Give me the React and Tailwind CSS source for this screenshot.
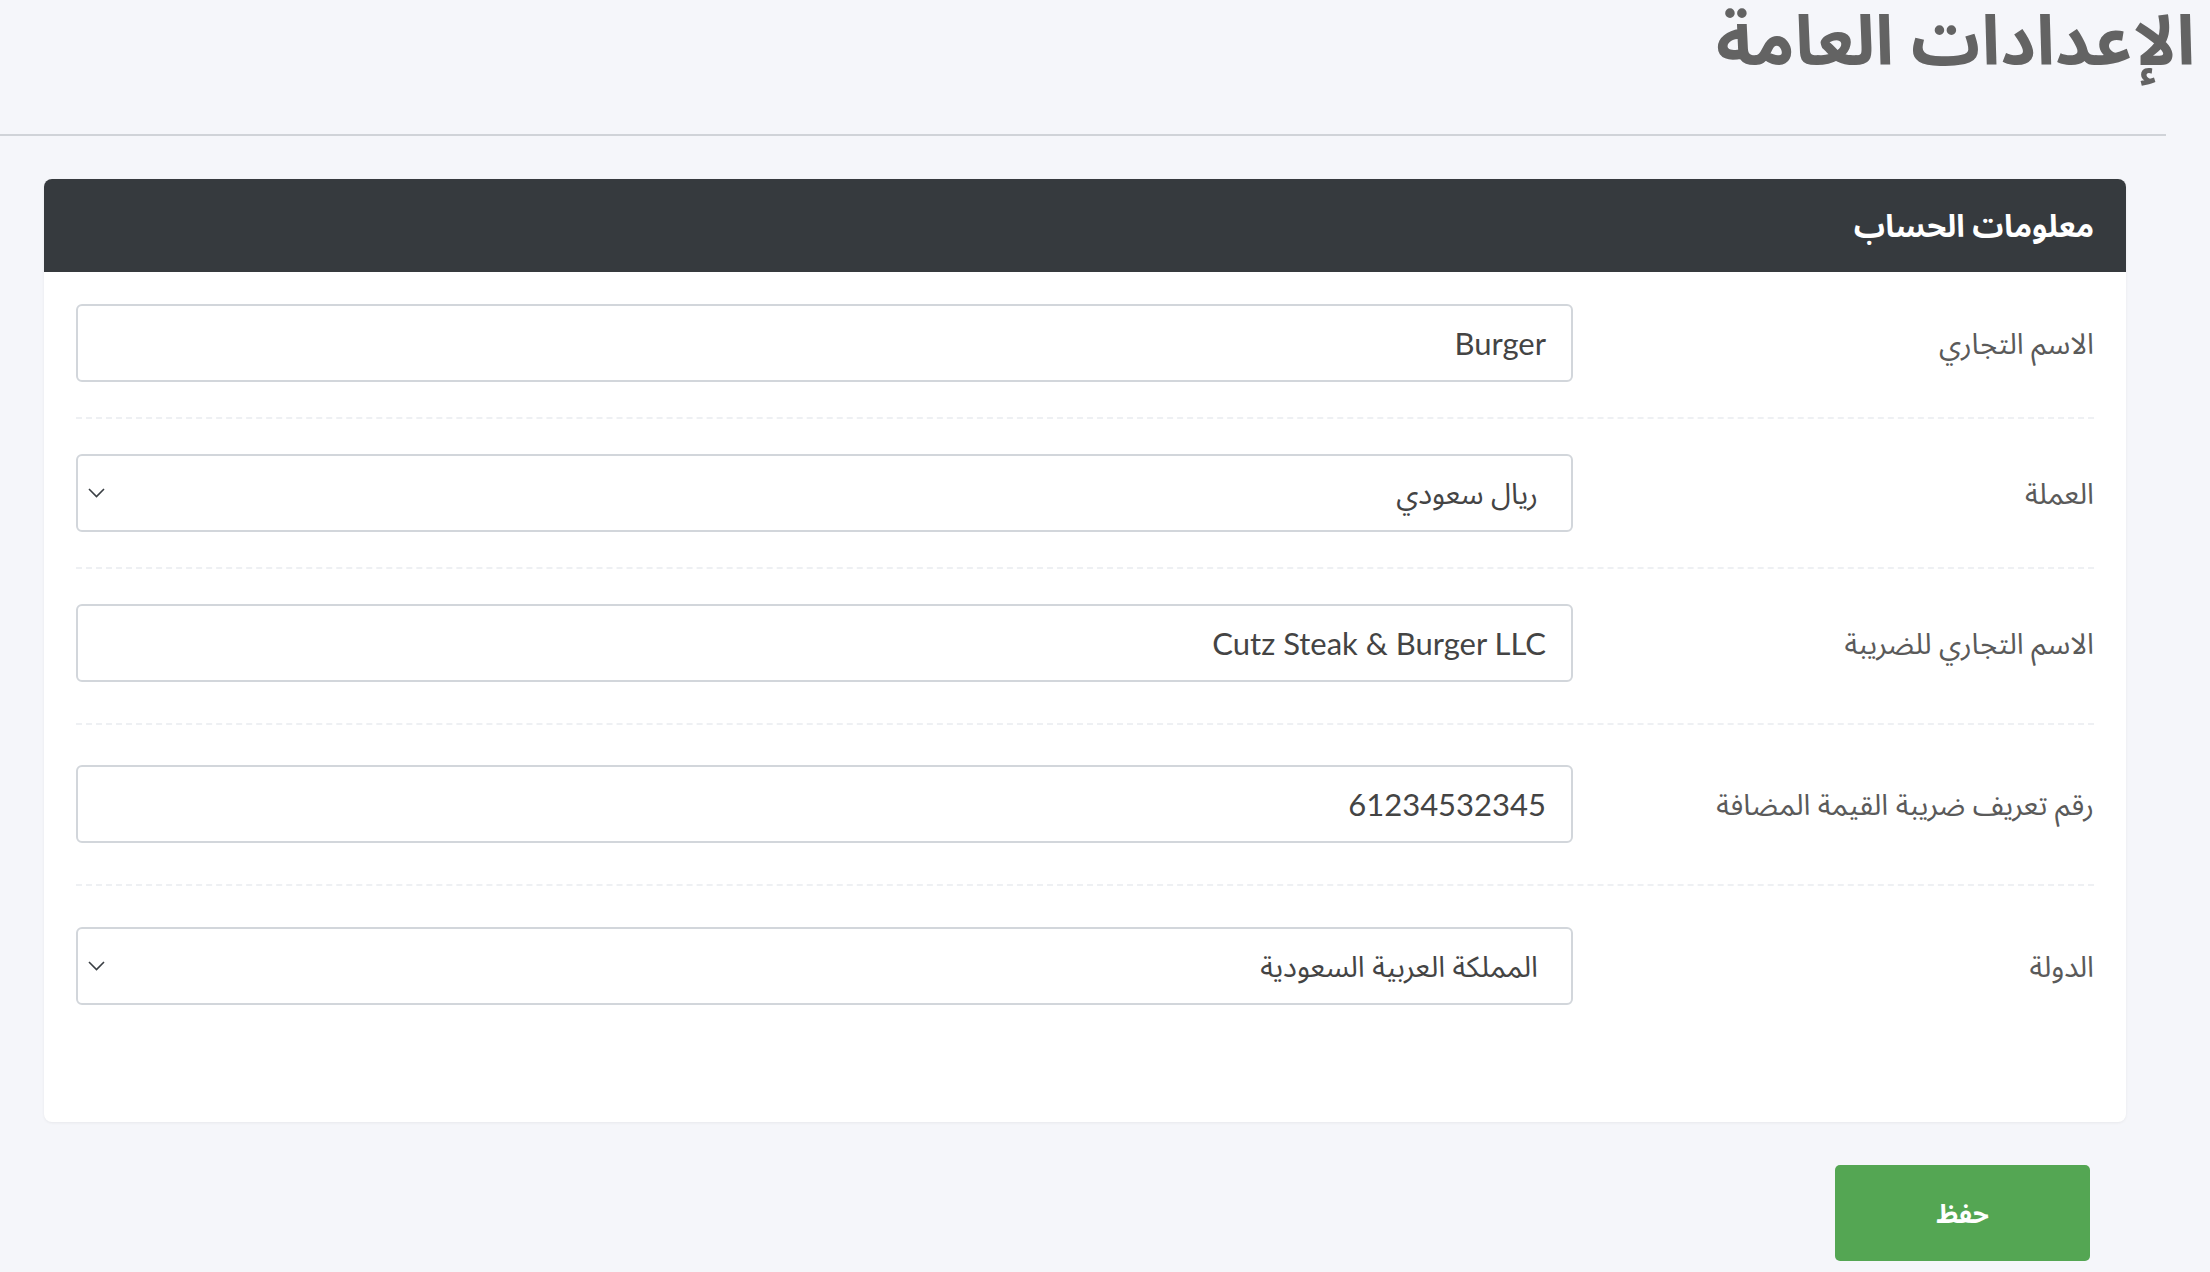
const rows = [
  { label: "الاسم التجاري", value: "Burger", type: "input", pad: "pt-[32px] pb-[35px] border-b-2 border-dashed border-[#eef0f3]" },
  { label: "العملة", value: "ريال سعودي", type: "select", pad: "pt-[35px] pb-[35px] border-b-2 border-dashed border-[#eef0f3]" },
  { label: "الاسم التجاري للضريبة", value: "Cutz Steak & Burger LLC", type: "input", pad: "pt-[35px] pb-[41px] border-b-2 border-dashed border-[#eef0f3]" },
  { label: "رقم تعريف ضريبة القيمة المضافة", value: "61234532345", type: "input", pad: "pt-[40px] pb-[41px] border-b-2 border-dashed border-[#eef0f3]" },
  { label: "الدولة", value: "المملكة العربية السعودية", type: "select", pad: "pt-[41px] pb-[117px]" },
]

function Chevron() {
  return (
    <svg width="17" height="10" viewBox="0 0 17 10" fill="none">
      <polyline points="1,1 8.5,8.5 16,1" stroke="#3a3f44" strokeWidth="1.6" />
    </svg>
  )
}

export default function App() {
  const font = "font-['Lato','Noto_Sans_Arabic','Noto_Sans','DejaVu_Sans',sans-serif]"
  return (
    <div dir="rtl" className={`min-h-[1272px] bg-[#f5f6fa] ${font}`}>
      <div className="h-[134px] pr-[15px]">
        <h1 className="text-[69px] font-bold leading-[78px] text-[#636363]">الإعدادات العامة</h1>
      </div>
      <div className="h-[2px] bg-[#d0d3d8] mr-[44px]" />

      <div className="ml-[44px] mr-[84px] mt-[43px] bg-white rounded-[8px] shadow-[0_1px_3px_rgba(0,0,0,0.06)]">
        <div className="h-[93px] bg-[#363a3e] rounded-t-[8px] flex items-center px-[32px]">
          <h2 className="text-white text-[31px] font-bold">معلومات الحساب</h2>
        </div>
        <div className="px-[32px]">
          {rows.map((r) => (
            <div key={r.label} className={`flex items-center ${r.pad}`}>
              <div className="flex-1 text-[29px] text-[#5a5a5a]">{r.label}</div>
              {r.type === "select" ? (
                <div className="w-[1497px] h-[78px] border-2 border-[#d2d6db] rounded-[6px] flex items-center justify-between pr-[33px] pl-[10px]">
                  <span className="text-[29px] text-[#444]">{r.value}</span>
                  <Chevron />
                </div>
              ) : (
                <div className="w-[1497px] h-[78px] border-2 border-[#d2d6db] rounded-[6px] flex items-center pr-[25px]">
                  <span className="text-[31px] text-[#444]">{r.value}</span>
                </div>
              )}
            </div>
          ))}
        </div>
      </div>

      <div className="flex mr-[120px] mt-[43px]">
        <button className="w-[255px] h-[96px] bg-[#54a653] rounded-[5px] text-white text-[26px] font-bold">حفظ</button>
      </div>
    </div>
  )
}
